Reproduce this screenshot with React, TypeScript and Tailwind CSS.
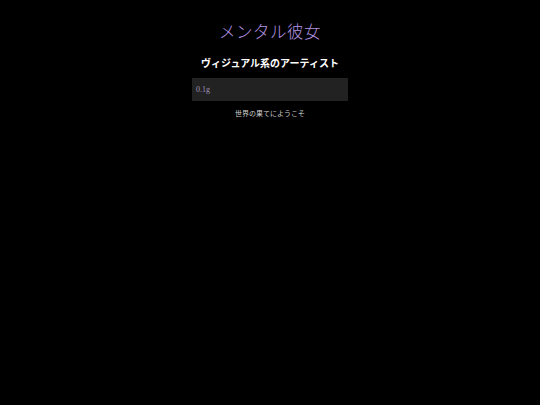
export default function App() {
  return (
    <div className="min-h-[405px] w-full bg-black flex flex-col items-center" style={{ fontFamily: '"Liberation Serif", "Noto Sans CJK JP", serif' }}>
      <h1 className="mt-[21px] text-[16.5px] leading-[24px] font-light text-[#b393e0] tracking-[0.5px]">メンタル彼女</h1>
      <h2 className="mt-[12px] text-[10px] leading-[14px] font-bold text-white">ヴィジュアル系のアーティスト</h2>
      <div className="mt-[7px] w-[156px] h-[23px] bg-[#222222] flex items-center px-[4px]">
        <span className="text-[8px] text-[#a093b8]">0.1g</span>
      </div>
      <p className="mt-[8px] text-[7px] leading-[10px] text-[#cccccc]">世界の果てにようこそ</p>
    </div>
  );
}
